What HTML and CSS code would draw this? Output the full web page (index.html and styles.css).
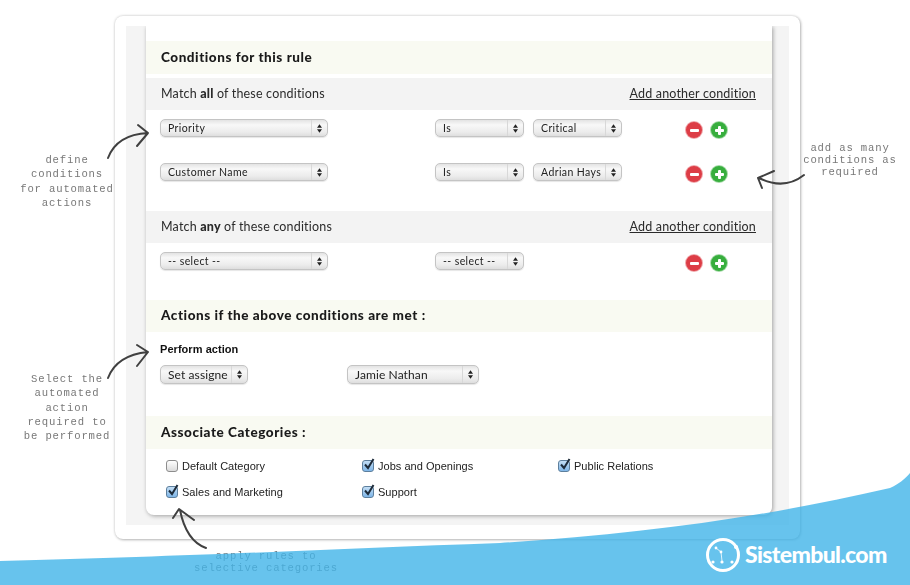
FILE: index.html
```html
<!DOCTYPE html>
<html lang="en">
<head>
<meta charset="utf-8">
<title>Conditions for this rule</title>
<link rel="stylesheet" href="styles.css">
</head>
<body>
<div class="stage">
  <div class="card">
    <div class="band">
      <div class="panel">
        <h2 class="heading h-first">Conditions for this rule</h2>
        <div class="match"><span>Match <b>all</b> of these conditions</span><a class="add">Add another condition</a></div>
        <div class="row row-a">
          <div class="sel w168"><span>Priority</span><i class="arr"><svg viewBox="0 0 6 10"><path d="M3 0 6 4H0zM3 10 0 6h6z"/></svg></i></div>
          <div class="sel w89 mid"><span>Is</span><i class="arr"><svg viewBox="0 0 6 10"><path d="M3 0 6 4H0zM3 10 0 6h6z"/></svg></i></div>
          <div class="sel w89 third"><span>Critical</span><i class="arr"><svg viewBox="0 0 6 10"><path d="M3 0 6 4H0zM3 10 0 6h6z"/></svg></i></div>
          <div class="btns"><i class="rb minus"></i><i class="rb plus"></i></div>
        </div>
        <div class="row row-b">
          <div class="sel w168"><span>Customer Name</span><i class="arr"><svg viewBox="0 0 6 10"><path d="M3 0 6 4H0zM3 10 0 6h6z"/></svg></i></div>
          <div class="sel w89 mid"><span>Is</span><i class="arr"><svg viewBox="0 0 6 10"><path d="M3 0 6 4H0zM3 10 0 6h6z"/></svg></i></div>
          <div class="sel w89 third"><span>Adrian Hays</span><i class="arr"><svg viewBox="0 0 6 10"><path d="M3 0 6 4H0zM3 10 0 6h6z"/></svg></i></div>
          <div class="btns"><i class="rb minus"></i><i class="rb plus"></i></div>
        </div>
        <div class="match match-any"><span>Match <b>any</b> of these conditions</span><a class="add">Add another condition</a></div>
        <div class="row row-a">
          <div class="sel w168"><span>-- select --</span><i class="arr"><svg viewBox="0 0 6 10"><path d="M3 0 6 4H0zM3 10 0 6h6z"/></svg></i></div>
          <div class="sel w89 mid"><span>-- select --</span><i class="arr"><svg viewBox="0 0 6 10"><path d="M3 0 6 4H0zM3 10 0 6h6z"/></svg></i></div>
          <div class="spacer"></div>
          <div class="btns"><i class="rb minus"></i><i class="rb plus"></i></div>
        </div>
        <h2 class="heading h-actions">Actions if the above conditions are met :</h2>
        <div class="perform">Perform action</div>
        <div class="row row-action">
          <div class="sel big w88"><span>Set assigne</span><i class="arr"><svg viewBox="0 0 6 10"><path d="M3 0 6 4H0zM3 10 0 6h6z"/></svg></i></div>
          <div class="sel big w132"><span>Jamie Nathan</span><i class="arr"><svg viewBox="0 0 6 10"><path d="M3 0 6 4H0zM3 10 0 6h6z"/></svg></i></div>
        </div>
        <h2 class="heading h-cats">Associate Categories :</h2>
        <div class="cats">
          <label class="cat"><i class="cb"></i>Default Category</label>
          <label class="cat"><i class="cb on"><svg viewBox="0 0 14 14"><path d="M3 6.5 6 10 11.5 1" /></svg></i>Jobs and Openings</label>
          <label class="cat"><i class="cb on"><svg viewBox="0 0 14 14"><path d="M3 6.5 6 10 11.5 1" /></svg></i>Public Relations</label>
          <label class="cat"><i class="cb on"><svg viewBox="0 0 14 14"><path d="M3 6.5 6 10 11.5 1" /></svg></i>Sales and Marketing</label>
          <label class="cat"><i class="cb on"><svg viewBox="0 0 14 14"><path d="M3 6.5 6 10 11.5 1" /></svg></i>Support</label>
        </div>
      </div>
    </div>
  </div>

  <p class="note n1">define<br>conditions<br>for automated<br>actions</p>
  <p class="note n2">add as many<br>conditions as<br>required</p>
  <p class="note n3">Select the<br>automated<br>action<br>required to<br>be performed</p>
  <p class="note n4">apply rules to<br>selective categories</p>

  <svg class="overlay" viewBox="0 0 910 585">
    <path class="wave" d="M0 561C200 556 330 549 500 543C640 534 760 518 890 488C899 484 905 479 910 473V585H0Z"/>
    <g class="arrow">
      <path d="M108 158C114 142 128 134 148 133M138 125 148 133 137 146"/>
      <path d="M108 378C114 362 128 354 148 352M137 345 148 352 137 366"/>
      <path d="M804 175C790 186 775 186 759 178M774 171 758 178 762 188"/>
      <path d="M206 548C192 543 184 530 180 510M173 518 179 509 194 520"/>
    </g>
    <g class="logo-mark">
      <circle class="ring" cx="723" cy="555" r="15.5"/>
      <path class="lines" d="M716 548 721 552 722 561"/>
      <circle cx="716" cy="548" r="1.4"/><circle cx="721" cy="552" r="1.4"/><circle cx="722" cy="562" r="1.6"/>
      <circle cx="732" cy="562" r="1.6"/><circle cx="713" cy="562" r="1.6"/><circle cx="736" cy="547" r="2"/>
    </g>
  </svg>
  <div class="brand">Sistembul.com</div>
</div>
</body>
</html>
```
FILE: styles.css
```css
* { box-sizing: border-box; }
html, body { margin: 0; padding: 0; }
body { background: #fff; overflow: hidden; font-family: Lato, "Open Sans", sans-serif; color: #222; }
.stage { position: relative; width: 910px; height: 585px; overflow: hidden; padding: 16px 0 0 115px; }

.card { width: 685px; height: 523px; padding: 10px 11px 14px; background: #fff; border-radius: 8px; box-shadow: 0 0 3px rgba(0,0,0,.2), 1px 1px 3px rgba(0,0,0,.22); }
.band { height: 499px; padding: 0 17px 10px 20px; background: #f4f4f4; }
.panel { width: 626px; height: 489px; padding-top: 15px; background: #fff; border-radius: 0 0 8px 8px; box-shadow: 1px 1px 4px rgba(0,0,0,.35); filter: blur(.3px); clip-path: inset(0 -6px -6px -6px); }

.heading { margin: 0; height: 33px; padding: 0 15px; background: #f9faf2; font-size: 13.5px; line-height: 33px; font-weight: 900; color: #1a1a1a; letter-spacing: .55px; }
.h-actions { margin-top: 25px; height: 32px; line-height: 31px; }
.h-cats { margin-top: 32px; }

.match { display: flex; justify-content: space-between; height: 32px; margin-top: 4px; padding: 0 16px 0 15px; background: #f3f3f3; font-size: 12.5px; line-height: 32px; color: #2b2b2b; letter-spacing: .18px; }
.match b { font-weight: 900; }
.match-any { margin-top: 25px; }
.add { color: #2b2b2b; text-decoration: underline; }

.row { display: flex; align-items: flex-start; padding-left: 14px; }
.row-a { margin-top: 9px; height: 23px; }
.row-b { margin-top: 21px; height: 23px; }
.row-action { margin-top: 9px; gap: 99px; }

.sel { display: flex; flex: none; height: 18px; border: 1px solid #c4c4c4; border-radius: 5px; background: linear-gradient(#e3e3e3, #f8f8f8 30%, #ececec 75%, #dedede); font-size: 10.5px; line-height: 16px; color: #222; letter-spacing: .4px; box-shadow: 0 1px 1px rgba(0,0,0,.1); }
.sel span { flex: 1; min-width: 0; padding-left: 7px; overflow: hidden; white-space: nowrap; }
.arr { flex: none; display: flex; align-items: center; justify-content: center; width: 16px; border-left: 1px solid #d8d8d8; }
.arr svg { width: 5px; height: 9px; fill: #222; }
.big { height: 19px; font-size: 12px; line-height: 17px; letter-spacing: .1px; }
.w168 { width: 168px; }
.w89 { width: 89px; }
.w88 { width: 88px; }
.w132 { width: 132px; }
.mid { margin-left: 107px; }
.third { margin-left: 9px; }
.spacer { width: 98px; flex: none; }
.btns { display: flex; gap: 7px; margin: 2px 0 0 63px; }
.rb { position: relative; display: block; width: 18px; height: 18px; border-radius: 50%; border: 1px solid rgba(255,255,255,.55); }
.minus { background: #dd3d46; }
.plus { background: #37ae3d; }
.rb::before { content: ""; position: absolute; left: 3.5px; top: 6.5px; width: 9px; height: 3px; background: #fff; border-radius: 1px; }
.plus::after { content: ""; position: absolute; left: 6.5px; top: 3.5px; width: 3px; height: 9px; background: #fff; border-radius: 1px; }

.perform { margin: 11px 0 0 14px; font-family: "Liberation Sans", Arial, sans-serif; font-size: 11px; line-height: 13px; font-weight: 700; color: #111; letter-spacing: .05px; }

.cats { display: grid; grid-template-columns: repeat(3, 196px); grid-auto-rows: 26px; margin-top: 4px; padding-left: 20px; }
.cat { display: flex; align-items: center; gap: 4px; font-family: "Liberation Sans", Arial, sans-serif; font-size: 11px; letter-spacing: .03px; color: #222; }
.cb { display: block; flex: none; position: relative; width: 12px; height: 12px; border: 1px solid #8d8d8d; border-radius: 3px; background: linear-gradient(#fff, #dcdcdc); }
.cb.on { border-color: #5d7f9d; background: linear-gradient(#c3def5, #7fb6e8); }
.cb svg { position: absolute; left: -1px; top: -3px; width: 14px; height: 14px; fill: none; stroke: #1d2b3a; stroke-width: 2; }

.note { position: absolute; margin: 0; font-family: "Liberation Mono", monospace; font-size: 10.6px; letter-spacing: .84px; line-height: 14.3px; color: #787878; text-align: center; white-space: nowrap; filter: blur(.25px); }
.n1 { left: 17px; top: 153px; width: 100px; }
.n2 { left: 800px; top: 142px; width: 100px; line-height: 12px; }
.n3 { left: 17px; top: 372px; width: 100px; }
.n4 { left: 166px; top: 550px; width: 200px; line-height: 12px; }

.overlay { position: absolute; left: 0; top: 0; width: 910px; height: 585px; pointer-events: none; }
.wave { fill: #41b4e9; fill-opacity: .8; }
.arrow path { fill: none; stroke: #404040; stroke-width: 2; stroke-linecap: round; stroke-linejoin: round; }
.logo-mark { fill: #fff; }
.ring { fill: none; stroke: #fff; stroke-width: 3; }
.lines { fill: none; stroke: #fff; stroke-width: .8; }
.brand { position: absolute; left: 745px; top: 539px; font-size: 23px; line-height: 30px; font-weight: 900; color: #fff; letter-spacing: -.65px; white-space: nowrap; }
```
